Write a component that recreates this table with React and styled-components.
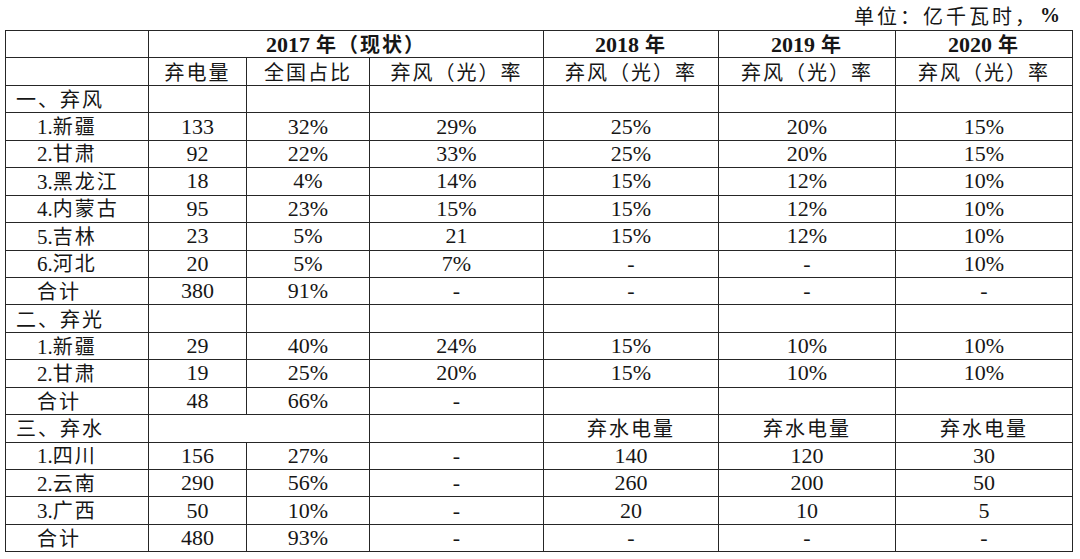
import React from "react";
import styled, { createGlobalStyle } from "styled-components";

const GlobalStyle = createGlobalStyle`
  html, body { margin: 0; padding: 0; background: #ffffff; }
  body { font-family: "Liberation Serif", "Noto Sans CJK SC", serif; color: #161616; }
`;

const Page = styled.div`
  width: 1080px;
  height: 559px;
  box-sizing: border-box;
  padding: 0 8px 0 5px;
  overflow: hidden;
`;

const UnitLine = styled.div`
  height: 30px;
  display: flex;
  align-items: center;
  justify-content: flex-end;
  padding-right: 12px;
  font-family: "Noto Sans CJK SC", sans-serif;
  font-size: 20px;
  letter-spacing: 3px;
  color: #151515;
`;

const Pct = styled.span`
  font-family: "Liberation Serif", serif;
  font-weight: 700;
  letter-spacing: 0;
  margin-left: 2px;
`;

const Table = styled.table`
  width: 1067px;
  border-collapse: collapse;
  table-layout: fixed;
  border: 1px solid #222;
`;

const Col = styled.col`
  width: ${(p) => p.$w}px;
`;

const Row = styled.tr`
  height: 27.45px;
`;

const Cell = styled.td`
  border: 1px solid #262626;
  padding: 0 0 0 ${(p) => (p.$indent != null ? p.$indent : 0)}px;
  text-align: ${(p) => (p.$indent != null ? "left" : "center")};
  vertical-align: middle;
  font-family: ${(p) =>
    p.$cjk
      ? '"Noto Sans CJK SC", sans-serif'
      : '"Liberation Serif", "Noto Sans CJK SC", serif'};
  font-size: ${(p) => (p.$cjk ? 20 : 22)}px;
  letter-spacing: ${(p) => (p.$cjk ? 2 : 0)}px;
  line-height: 20px;
  white-space: nowrap;
  color: #161616;
`;

const Year = styled.span`
  font-family: "Liberation Serif", serif;
  font-weight: 700;
  font-size: 22px;
  line-height: 20px;
  letter-spacing: 0;
  margin-right: 6px;
`;

const YearCjk = styled.span`
  font-family: "Noto Sans CJK SC", sans-serif;
  font-weight: 700;
  font-size: 20px;
  line-height: 20px;
  letter-spacing: 2px;
`;

const Num = styled.span`
  font-family: "Liberation Serif", serif;
  font-size: 21px;
  line-height: 20px;
  letter-spacing: 0;
`;

const Label = ({ text }) => {
  const m = text.match(/^(\d\.)(.*)$/);
  if (!m) return text;
  return (
    <>
      <Num>{m[1]}</Num>
      {m[2]}
    </>
  );
};

const widths = [143, 98, 123, 174, 175, 177, 177];

const rate = "弃风（光）率";

const windRows = [
  ["1.新疆", "133", "32%", "29%", "25%", "20%", "15%"],
  ["2.甘肃", "92", "22%", "33%", "25%", "20%", "15%"],
  ["3.黑龙江", "18", "4%", "14%", "15%", "12%", "10%"],
  ["4.内蒙古", "95", "23%", "15%", "15%", "12%", "10%"],
  ["5.吉林", "23", "5%", "21", "15%", "12%", "10%"],
  ["6.河北", "20", "5%", "7%", "-", "-", "10%"],
  ["合计", "380", "91%", "-", "-", "-", "-"],
];

const solarRows = [
  ["1.新疆", "29", "40%", "24%", "15%", "10%", "10%"],
  ["2.甘肃", "19", "25%", "20%", "15%", "10%", "10%"],
  ["合计", "48", "66%", "-", "", "", ""],
];

const waterRows = [
  ["1.四川", "156", "27%", "-", "140", "120", "30"],
  ["2.云南", "290", "56%", "-", "260", "200", "50"],
  ["3.广西", "50", "10%", "-", "20", "10", "5"],
  ["合计", "480", "93%", "-", "-", "-", "-"],
];

const DataRow = ({ cells }) => (
  <Row>
    <Cell $cjk $indent={31}>
      <Label text={cells[0]} />
    </Cell>
    {cells.slice(1).map((c, i) => (
      <Cell key={i}>{c}</Cell>
    ))}
  </Row>
);

const SectionRow = ({ title, children }) => (
  <Row>
    <Cell $cjk $indent={10}>
      {title}
    </Cell>
    {children}
  </Row>
);

const YearHead = ({ year, suffix, span }) => (
  <Cell $cjk colSpan={span}>
    <Year>{year}</Year>
    <YearCjk>{suffix}</YearCjk>
  </Cell>
);

export default function App() {
  return (
    <>
      <GlobalStyle />
      <Page>
        <UnitLine>
          单位：亿千瓦时，<Pct>%</Pct>
        </UnitLine>
        <Table>
          <colgroup>
            {widths.map((w, i) => (
              <Col key={i} $w={w} />
            ))}
          </colgroup>
          <tbody>
            <Row>
              <Cell />
              <YearHead year="2017" suffix="年（现状）" span={3} />
              <YearHead year="2018" suffix="年" />
              <YearHead year="2019" suffix="年" />
              <YearHead year="2020" suffix="年" />
            </Row>
            <Row>
              <Cell />
              <Cell $cjk>弃电量</Cell>
              <Cell $cjk>全国占比</Cell>
              <Cell $cjk>{rate}</Cell>
              <Cell $cjk>{rate}</Cell>
              <Cell $cjk>{rate}</Cell>
              <Cell $cjk>{rate}</Cell>
            </Row>
            <SectionRow title="一、弃风">
              {[0, 1, 2, 3, 4, 5].map((i) => (
                <Cell key={i} />
              ))}
            </SectionRow>
            {windRows.map((r, i) => (
              <DataRow key={"w" + i} cells={r} />
            ))}
            <SectionRow title="二、弃光">
              {[0, 1, 2, 3, 4, 5].map((i) => (
                <Cell key={i} />
              ))}
            </SectionRow>
            {solarRows.map((r, i) => (
              <DataRow key={"s" + i} cells={r} />
            ))}
            <SectionRow title="三、弃水">
              <Cell colSpan={2} />
              <Cell />
              <Cell $cjk>弃水电量</Cell>
              <Cell $cjk>弃水电量</Cell>
              <Cell $cjk>弃水电量</Cell>
            </SectionRow>
            {waterRows.map((r, i) => (
              <DataRow key={"h" + i} cells={r} />
            ))}
          </tbody>
        </Table>
      </Page>
    </>
  );
}
